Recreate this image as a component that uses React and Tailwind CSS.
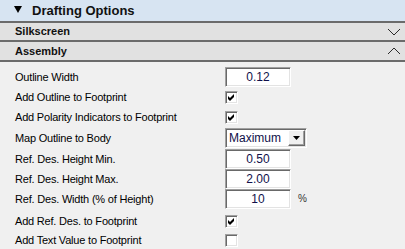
import React from "react";

const sunken =
  "border border-t-[#a0a0a0] border-l-[#a0a0a0] border-r-white border-b-white shadow-[inset_1px_1px_0_#696969,inset_-1px_-1px_0_#e3e3e3] bg-white";

function Check({ checked }) {
  return (
    <div className={`w-[13px] h-[13px] ${sunken} relative`}>
      {checked && (
        <svg width="13" height="13" viewBox="0 0 13 13" className="absolute left-[-1px] top-[-1px]">
          <polygon points="3,5 5,7 9,3 9,6 5,10 3,8" fill="#000" />
        </svg>
      )}
    </div>
  );
}

function Field({ value }) {
  return (
    <div className={`w-[66px] h-[20px] ${sunken} flex items-center justify-center text-[12px] text-[#10104a]`}>
      {value}
    </div>
  );
}

function Row({ label, h, children, extra = "" }) {
  return (
    <div className={`flex items-center ${h} ${extra}`}>
      <div className="w-[210px] text-[11px] tracking-[-0.2px] text-black leading-none">{label}</div>
      {children}
    </div>
  );
}

function Chevron({ up }) {
  return (
    <svg width="14" height="8" viewBox="0 0 14 8">
      <polyline
        points={up ? "1,7 7,1 13,7" : "1,1 7,7 13,1"}
        fill="none"
        stroke="#2a2a2a"
        strokeWidth="1"
      />
    </svg>
  );
}

export default function App() {
  return (
    <div className="w-[405px] h-[249px] bg-[#f0f0f0] overflow-hidden font-['Liberation_Sans',Arial,sans-serif]">
      <div className="h-[21px] bg-[#d7e4f2] flex items-center pl-[14px] gap-[10px]">
        <svg width="8" height="7" viewBox="0 0 8 7" className="mt-[-3px]">
          <polygon points="0,0 8,0 4,7" fill="#000" />
        </svg>
        <span className="text-[13px] font-bold text-[#111] leading-none">Drafting Options</span>
      </div>
      <div className="h-[2px] bg-[#6b6b6b]" />
      <div className="h-[17px] bg-[#e1e1e1] flex items-center justify-between pl-[15px] pr-[4px]">
        <span className="text-[11px] font-bold text-[#111] leading-none">Silkscreen</span>
        <Chevron />
      </div>
      <div className="h-[2px] bg-[#6b6b6b]" />
      <div className="h-[18px] bg-[#e1e1e1] flex items-center justify-between pl-[15px] pr-[4px]">
        <span className="text-[11px] font-bold text-[#111] leading-none">Assembly</span>
        <Chevron up />
      </div>
      <div className="h-[2px] bg-[#6b6b6b]" />
      <div className="pl-[15px] pt-[5px] flex flex-col">
        <Row label="Outline Width" h="h-[20px]">
          <Field value="0.12" />
        </Row>
        <Row label="Add Outline to Footprint" h="h-[20px]">
          <Check checked />
        </Row>
        <Row label="Add Polarity Indicators to Footprint" h="h-[20px]">
          <Check checked />
        </Row>
        <Row label="Map Outline to Body" h="h-[22px]">
          <div className={`w-[82px] h-[20px] ${sunken} flex items-center justify-between pl-[3px] pr-[1px]`}>
            <span className="text-[12px] text-[#10104a] leading-none">Maximum</span>
            <div className="w-[17px] h-[16px] bg-[#f0f0f0] border border-t-white border-l-white border-r-[#696969] border-b-[#696969] shadow-[inset_-1px_-1px_0_#a0a0a0] flex items-center justify-center">
              <svg width="7" height="4" viewBox="0 0 7 4">
                <polygon points="0,0 7,0 3.5,4" fill="#000" />
              </svg>
            </div>
          </div>
        </Row>
        <Row label="Ref. Des. Height Min." h="h-[20px]">
          <Field value="0.50" />
        </Row>
        <Row label="Ref. Des. Height Max." h="h-[20px]">
          <Field value="2.00" />
        </Row>
        <Row label="Ref. Des. Width (% of Height)" h="h-[20px]">
          <Field value="10" />
          <span className="ml-[7px] text-[10px] text-[#333] leading-none">%</span>
        </Row>
        <Row label="Add Ref. Des. to Footprint" h="h-[20px]" extra="mt-[2px]">
          <Check checked />
        </Row>
        <Row label="Add Text Value to Footprint" h="h-[19px]">
          <Check />
        </Row>
      </div>
    </div>
  );
}
